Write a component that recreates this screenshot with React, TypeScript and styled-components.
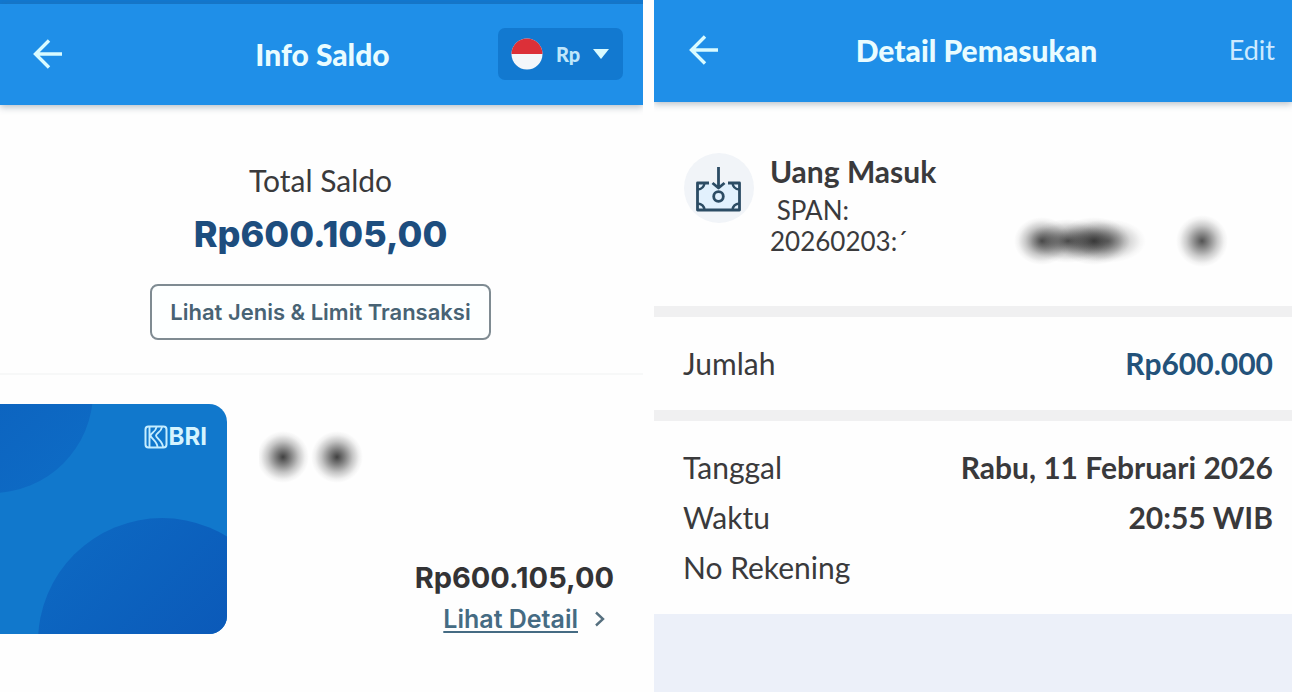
import React from "react";
import styled, { createGlobalStyle } from "styled-components";

const GlobalStyle = createGlobalStyle`
  *, *::before, *::after { box-sizing: border-box; }
  body { margin: 0; background: #fefefe; color: #3a3a3c; font-family: Lato, "Open Sans", sans-serif; }
  h1, h2, p, dl, dd, dt { margin: 0; }
  button, select { font: inherit; color: inherit; }
`;

const Page = styled.div`
  display: grid;
  grid-template-columns: minmax(0, 643fr) minmax(0, 638fr);
  column-gap: 11px;
  min-height: 100vh;
`;

const Screen = styled.main`
  display: flex;
  flex-direction: column;
  min-width: 0;
  overflow: hidden;
`;

const StatusStrip = styled.div`
  height: 4px;
  background: #1178d0;
`;

const Header = styled.header<{ $height: number; $start: number; $end: number }>`
  display: grid;
  grid-template-columns: 1fr auto 1fr;
  align-items: center;
  height: ${(p) => p.$height}px;
  padding: 0 ${(p) => p.$end}px 2px ${(p) => p.$start}px;
  background: #1f8fe8;
  color: #e9fcff;
  box-shadow: 0 2px 7px rgba(70, 90, 110, 0.4);
`;

const Title = styled.h1`
  font-size: 30px;
  line-height: 36px;
  font-weight: 900;
`;

const BackButton = styled.button`
  display: flex;
  justify-content: center;
  width: 52px;
  padding: 0;
  border: 0;
  background: none;
  cursor: pointer;
`;

const EditButton = styled.button`
  justify-self: end;
  padding: 0;
  border: 0;
  background: none;
  font-size: 27px;
  line-height: 36px;
  color: #cdeaff;
  cursor: pointer;
`;

const Currency = styled.label`
  justify-self: end;
  display: grid;
  grid-template-columns: 32px 1fr;
  align-items: center;
  column-gap: 13px;
  width: 125px;
  height: 52px;
  padding: 0 13px;
  border-radius: 7px;
  background: #1279d0;
`;

const SelectWrap = styled.span`
  display: grid;
  align-items: center;
  & > * { grid-area: 1 / 1; }
  & > svg { justify-self: end; pointer-events: none; }
`;

const CurrencySelect = styled.select`
  width: 100%;
  padding: 0;
  border: 0;
  appearance: none;
  background: none;
  color: #bfe6fb;
  font-size: 20px;
  line-height: 28px;
  font-weight: 900;
`;

const Summary = styled.section`
  display: flex;
  flex-direction: column;
  align-items: center;
  padding: 57px 2px 33px 0;
  border-bottom: 2px solid #f7f8f8;
`;

const SummaryLabel = styled.h2`
  font-size: 30px;
  line-height: 36px;
  font-weight: 400;
`;

const TotalAmount = styled.p`
  margin-top: 14px;
  font-family: Inter, sans-serif;
  font-size: 36px;
  line-height: 44px;
  font-weight: 800;
  color: #1d4d7e;
`;

const OutlineButton = styled.button`
  height: 56px;
  margin-top: 28px;
  padding: 0 18px;
  border: 2px solid #7f8b92;
  border-radius: 8px;
  background: #fdffff;
  color: #486374;
  font-family: Inter, sans-serif;
  font-size: 22px;
  font-weight: 600;
  cursor: pointer;
`;

const Account = styled.section`
  display: grid;
  grid-template-columns: 227px 1fr;
  column-gap: 32px;
  padding: 29px 29px 0 0;
`;

const Card = styled.div`
  position: relative;
  height: 230px;
  border-radius: 0 18px 18px 0;
  overflow: hidden;
  background: #1178cc;
`;

const CardArt = styled.svg`
  position: absolute;
  inset: 0;
`;

const Brand = styled.div`
  position: relative;
  display: flex;
  align-items: center;
  justify-content: flex-end;
  gap: 1px;
  padding: 20px 20px 0 0;
  color: #d5f4ff;
  font-family: Inter, sans-serif;
  font-size: 24px;
  line-height: 26px;
  font-weight: 700;
`;

const AccountInfo = styled.div`
  display: flex;
  flex-direction: column;
  justify-content: space-between;
  padding-top: 27px;
`;

const AccountBalance = styled.div`
  display: flex;
  flex-direction: column;
  align-items: flex-end;
`;

const Balance = styled.p`
  margin-bottom: 6px;
  font-family: Inter, sans-serif;
  font-size: 29px;
  line-height: 40px;
  font-weight: 700;
  color: #333335;
`;

const DetailLink = styled.a`
  display: flex;
  align-items: center;
  gap: 16px;
  padding-right: 8px;
  color: #456b83;
  font-family: Inter, sans-serif;
  font-size: 25px;
  line-height: 30px;
  font-weight: 600;
  text-decoration: none;
  & > span { text-decoration: underline; text-decoration-thickness: 2px; text-underline-offset: 3px; }
`;

const Transaction = styled.section`
  display: grid;
  grid-template-columns: 70px 1fr;
  column-gap: 16px;
  align-items: start;
  padding: 51px 30px 49px 30px;
`;

const TransactionText = styled.div`
  display: flex;
  flex-direction: column;
`;

const TransactionTitle = styled.h2`
  font-size: 30px;
  line-height: 36px;
  font-weight: 700;
`;

const Reference = styled.div`
  display: flex;
  align-items: flex-end;
  justify-content: space-between;
  margin-top: 6px;
  padding-right: 38px;
`;

const ReferenceText = styled.p`
  font-size: 26px;
  line-height: 31px;
  white-space: pre;
`;

const MaskArt = styled.svg`
  overflow: visible;
`;

const Separator = styled.hr`
  flex: none;
  width: 100%;
  height: 11px;
  margin: 0;
  border: 0;
  background: #f0f0f1;
`;

const Details = styled.dl`
  padding: 21px 19px 22px 29px;
`;

const Row = styled.div`
  display: flex;
  align-items: center;
  justify-content: space-between;
  height: 50px;
  font-size: 30px;
  line-height: 36px;
`;

const Value = styled.dd<{ $accent?: boolean }>`
  font-weight: 700;
  color: ${(p) => (p.$accent ? "#23527a" : "#39393b")};
`;

const Rest = styled.div`
  flex: 1;
  background: #ecf0f9;
`;

const BackArrow = () => (
  <svg width="30" height="30" viewBox="0 0 30 30" fill="none" stroke="#d9fbff" strokeWidth="3.4" aria-hidden="true">
    <path d="M29 15H3M16 1.5 2.5 15 16 28.5" />
  </svg>
);

const Flag = () => (
  <svg width="32" height="32" viewBox="0 0 32 32" aria-hidden="true">
    <circle cx="16" cy="16" r="15.5" fill="#f4f6fa" />
    <path d="M.5 16a15.5 15.5 0 0 1 31 0Z" fill="#dc3038" />
  </svg>
);

const CashIn = () => (
  <svg width="70" height="70" viewBox="0 0 70 70" fill="none" aria-hidden="true">
    <circle cx="35" cy="35" r="35" fill="#f1f4f8" />
    <rect x="13.5" y="30" width="42" height="27" rx="1" fill="#e2f1fd" />
    <g stroke="#2c4c64" strokeWidth="2.8" strokeLinejoin="round">
      <path d="M25 30H13.5V57H55.5V30H44" />
      <path d="M13.5 36.5Q20 36 20.5 30M55.5 36.5Q49 36 48.5 30M13.5 50.5Q20 51 20.5 57M55.5 50.5Q49 51 48.5 57" strokeWidth="2.4" />
      <circle cx="34.5" cy="43.5" r="4.8" />
      <path d="M34.5 14V34M28.5 30 34.5 35 40.5 30" />
    </g>
  </svg>
);

const BankMark = () => (
  <svg width="24" height="24" viewBox="0 0 24 24" fill="none" stroke="#c5edff" aria-hidden="true">
    <rect x="1.5" y="1.5" width="21" height="21" rx="3" strokeWidth="2" />
    <path d="M5.5 2V22M12.5 2C12 7 6.5 8 6.5 10.5S13 16 13.5 22M18 2C17.5 7 12 8 12 10.5S18.5 16 19 22" strokeWidth="1.9" />
  </svg>
);

const SmudgeStops = ({ strength }: { strength: number }) => (
  <>
    <stop offset="0" stopColor="#111" stopOpacity={strength} />
    <stop offset=".3" stopColor="#111" stopOpacity={strength * 0.66} />
    <stop offset=".6" stopColor="#111" stopOpacity={strength * 0.3} />
    <stop offset=".85" stopColor="#111" stopOpacity={strength * 0.07} />
    <stop offset="1" stopColor="#111" stopOpacity="0" />
  </>
);

const MaskedName = () => (
  <svg width="104" height="52" viewBox="0 0 104 52" aria-hidden="true">
    <radialGradient id="smudge-name"><SmudgeStops strength={0.8} /></radialGradient>
    <g fill="url(#smudge-name)">
      <circle cx="24" cy="26" r="26" />
      <circle cx="78" cy="26" r="26" />
    </g>
  </svg>
);

const MaskedReference = () => (
  <MaskArt width="214" height="34" viewBox="0 0 214 34" aria-hidden="true">
    <radialGradient id="smudge-ref"><SmudgeStops strength={0.72} /></radialGradient>
    <g fill="url(#smudge-ref)">
      <ellipse cx="32" cy="18" rx="28" ry="24" />
      <ellipse cx="58" cy="18" rx="38" ry="22" />
      <ellipse cx="84" cy="18" rx="36" ry="24" />
      <ellipse cx="98" cy="18" rx="38" ry="22" opacity=".7" />
      <circle cx="192" cy="18" r="26" />
    </g>
  </MaskArt>
);

export default function App() {
  return (
    <Page>
      <GlobalStyle />
      <Screen>
        <StatusStrip />
        <Header $height={101} $start={22} $end={20}>
          <BackButton aria-label="Kembali"><BackArrow /></BackButton>
          <Title>Info Saldo</Title>
          <Currency>
            <Flag />
            <SelectWrap>
              <CurrencySelect aria-label="Mata uang" defaultValue="idr">
                <option value="idr">Rp</option>
              </CurrencySelect>
              <svg width="18" height="10" viewBox="0 0 18 10" aria-hidden="true">
                <path d="M1 0H17L9 10Z" fill="#d9fbff" />
              </svg>
            </SelectWrap>
          </Currency>
        </Header>
        <Summary>
          <SummaryLabel>Total Saldo</SummaryLabel>
          <TotalAmount>Rp600.105,00</TotalAmount>
          <OutlineButton>Lihat Jenis &amp; Limit Transaksi</OutlineButton>
        </Summary>
        <Account>
          <Card>
            <CardArt width="227" height="230" viewBox="0 0 227 230" aria-hidden="true">
              <defs>
                <linearGradient id="disc-low" x1="0" y1="0" x2="1" y2="1">
                  <stop offset="0" stopColor="#0d6bc4" />
                  <stop offset=".7" stopColor="#0b57b7" />
                </linearGradient>
                <linearGradient id="disc-high" x1="0" y1="0" x2="1" y2="1">
                  <stop offset="0" stopColor="#0b5ab9" />
                  <stop offset="1" stopColor="#0e6dc6" />
                </linearGradient>
              </defs>
              <circle cx="-8" cy="-12" r="101" fill="url(#disc-high)" />
              <circle cx="162" cy="238" r="124" fill="url(#disc-low)" />
            </CardArt>
            <Brand><BankMark />BRI</Brand>
          </Card>
          <AccountInfo>
            <MaskedName />
            <AccountBalance>
              <Balance>Rp600.105,00</Balance>
              <DetailLink href="#detail">
                <span>Lihat Detail</span>
                <svg width="12" height="16" viewBox="0 0 12 16" fill="none" stroke="#56707f" strokeWidth="2.4" aria-hidden="true">
                  <path d="M2 1.5 9 8 2 14.5" />
                </svg>
              </DetailLink>
            </AccountBalance>
          </AccountInfo>
        </Account>
      </Screen>
      <Screen>
        <Header $height={102} $start={24} $end={17}>
          <BackButton aria-label="Kembali"><BackArrow /></BackButton>
          <Title>Detail Pemasukan</Title>
          <EditButton>Edit</EditButton>
        </Header>
        <Transaction>
          <CashIn />
          <TransactionText>
            <TransactionTitle>Uang Masuk</TransactionTitle>
            <Reference>
              <ReferenceText>{" SPAN:\n20260203:´"}</ReferenceText>
              <MaskedReference />
            </Reference>
          </TransactionText>
        </Transaction>
        <Separator />
        <Details>
          <Row><dt>Jumlah</dt><Value $accent>Rp600.000</Value></Row>
        </Details>
        <Separator />
        <Details>
          <Row><dt>Tanggal</dt><Value>Rabu, 11 Februari 2026</Value></Row>
          <Row><dt>Waktu</dt><Value>20:55 WIB</Value></Row>
          <Row><dt>No Rekening</dt><dd /></Row>
        </Details>
        <Rest />
      </Screen>
    </Page>
  );
}
